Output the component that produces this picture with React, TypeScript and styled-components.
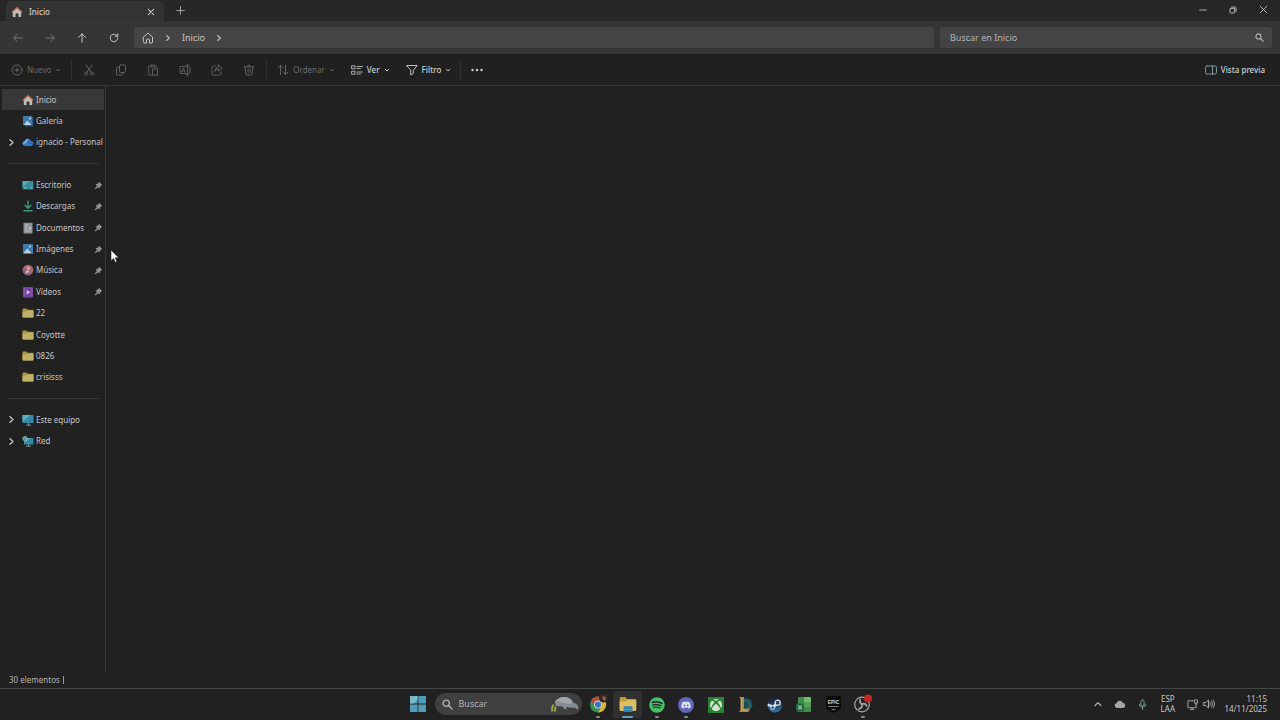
import React from "react";
import styled, { createGlobalStyle } from "styled-components";
import { FaDiscord, FaSpotify, FaSteamSymbol, FaXbox } from "react-icons/fa";

const GlobalStyle = createGlobalStyle`
  * { box-sizing: border-box; }
  body {
    margin: 0;
    background: #212121;
    color: #c6c6c6;
    font: 8px/12px "Noto Sans", "Open Sans", sans-serif;
  }
  button, input {
    font: inherit;
    color: inherit;
    border: 0;
    padding: 0;
    margin: 0;
    background: none;
  }
  a { color: inherit; text-decoration: none; }
  svg { display: block; flex: none; }
`;

const Screen = styled.div`
  display: flex;
  flex-direction: column;
  min-height: 100vh;
`;

/* ---------- title bar ---------- */

const TitleBar = styled.header`
  display: flex;
  height: 21px;
  background: #272727;
`;

const Tab = styled.div`
  display: flex;
  align-items: center;
  width: 158px;
  margin: 1px 0 0 6px;
  padding: 1px 7px 0 5px;
  gap: 6px;
  border-radius: 5px 5px 0 0;
  background: #333;
  color: #d0d0d0;
  font-weight: 500;
`;

const TabTitle = styled.span`
  flex: 1;
`;

const IconButton = styled.button<{ $w?: number; $dim?: boolean }>`
  display: flex;
  align-items: center;
  justify-content: center;
  width: ${(p) => p.$w ?? 32}px;
  color: ${(p) => (p.$dim ? "#727777" : "#c4c4c4")};
`;

const WindowControls = styled.div`
  display: flex;
  margin-left: auto;
  padding: 0 2px 2px 0;
`;

/* ---------- navigation bar ---------- */

const NavBar = styled.div`
  display: flex;
  align-items: center;
  height: 33px;
  padding: 0 8px 0 2px;
  background: #353535;
`;

const fieldBox = `
  display: flex;
  align-items: center;
  height: 21px;
  border-radius: 3px;
  background: #444;
  font-size: 9px;
`;

const AddressBar = styled.nav`
  ${fieldBox}
  flex: 792;
  margin: 0 6px 0 4px;
  padding-left: 8px;
  gap: 10px;
`;

const SearchBox = styled.label`
  ${fieldBox}
  flex: 314;
  padding: 0 8px 0 10px;
`;

const SearchInput = styled.input`
  flex: 1;
  min-width: 0;
  outline: 0;
  &::placeholder { color: #b4b4b4; opacity: 1; }
`;

/* ---------- command bar ---------- */

const CommandBar = styled.div`
  display: flex;
  align-items: center;
  height: 32px;
  padding: 0 15px 0 11px;
  background: #202020;
  border-bottom: 1px solid #353535;
`;

const Command = styled.button<{ $dim?: boolean }>`
  display: flex;
  align-items: center;
  gap: 4px;
  color: ${(p) => (p.$dim ? "#6c6c6c" : "#d0d0d0")};
  font-weight: ${(p) => (p.$dim ? 400 : 500)};
`;

const CommandGroup = styled.div<{ $gap?: number }>`
  display: flex;
  align-items: center;
  gap: ${(p) => p.$gap ?? 0}px;
`;

const Divider = styled.span<{ $l: number; $r: number }>`
  width: 1px;
  height: 20px;
  margin: 0 ${(p) => p.$r}px 0 ${(p) => p.$l}px;
  background: #303030;
`;

const PreviewSlot = styled.div`
  margin-left: auto;
`;

/* ---------- body ---------- */

const Body = styled.div`
  display: flex;
  flex: 1;
`;

const Sidebar = styled.nav`
  width: 106px;
  padding: 3px 1px 0 2px;
  border-right: 1px solid #363636;
`;

const ItemList = styled.ul`
  display: grid;
  grid-template-columns: minmax(0, 1fr);
  grid-auto-rows: 1fr;
  height: 363px;
  margin: 0;
  padding: 0;
  list-style: none;
`;

const Item = styled.li`
  display: grid;
  grid-template-columns: minmax(0, 1fr);
`;

const ItemLink = styled.a<{ $active?: boolean }>`
  display: flex;
  align-items: center;
  padding-right: 1px;
  background: ${(p) => (p.$active ? "#383838" : "transparent")};
`;

const ExpandSlot = styled.span`
  display: flex;
  justify-content: center;
  flex: none;
  width: 18px;
`;

const ItemIcon = styled.span`
  display: flex;
  margin: 0 2px;
`;

const ItemLabel = styled.span`
  flex: 1;
  min-width: 0;
  white-space: nowrap;
`;

const Rule = styled.hr`
  align-self: center;
  width: 92px;
  height: 1px;
  margin: 0 0 0 5px;
  border: 0;
  background: #383838;
`;

const Content = styled.main`
  flex: 1;
`;

const StatusBar = styled.footer`
  display: flex;
  align-items: center;
  gap: 3px;
  height: 16px;
  padding-left: 9px;
  color: #b4b4b4;
`;

const StatusMark = styled.span`
  width: 1px;
  height: 8px;
  background: #999;
`;

/* ---------- taskbar ---------- */

const Taskbar = styled.footer`
  display: grid;
  grid-template-columns: 1fr auto 1fr;
  height: 32px;
  padding-bottom: 1px;
  background: #212121;
  border-top: 1px solid #454745;
`;

const TaskCenter = styled.div`
  display: flex;
  grid-column: 2;
  align-items: center;
`;

const TaskSearch = styled.label`
  display: flex;
  align-items: center;
  width: 147px;
  height: 22px;
  margin: 0 2px;
  padding: 0 3px 0 7px;
  gap: 6px;
  border-radius: 11px;
  background: #3f3f3f;
  font-size: 9px;
`;

const AppRow = styled.div`
  display: grid;
  grid-template-columns: repeat(10, 1fr);
  width: 294px;
`;

const AppButton = styled.button<{ $active?: boolean }>`
  display: flex;
  flex-direction: column;
  align-items: center;
  justify-content: flex-end;
  height: 27px;
  gap: 3px;
  border-radius: 3px;
  background: ${(p) => (p.$active ? "#303030" : "transparent")};
`;

const RunMark = styled.span<{ $kind?: "run" | "active" }>`
  width: ${(p) => (p.$kind === "active" ? 11 : 4)}px;
  height: 2px;
  border-radius: 1px;
  background: ${(p) => (p.$kind === "active" ? "#58a9bd" : p.$kind ? "#8a8a8a" : "transparent")};
`;

const Tray = styled.div`
  display: flex;
  align-items: center;
  justify-content: flex-end;
  padding-right: 13px;
`;

const TrayItem = styled.button<{ $mr: number }>`
  margin-right: ${(p) => p.$mr}px;
  line-height: 10px;
`;

const Clock = styled.button`
  display: flex;
  flex-direction: column;
  align-items: flex-end;
  width: 42px;
  line-height: 10px;
  white-space: nowrap;
`;

const Pointer = styled.svg`
  position: absolute;
  left: 110px;
  top: 249px;
`;

/* ---------- icons ---------- */

type LineProps = { d: string; w?: number; h?: number; box?: string; color?: string; sw?: number };

function Line({ d, w = 12, h = w, box = "0 0 12 12", color = "currentColor", sw = 1 }: LineProps) {
  return (
    <svg width={w} height={h} viewBox={box} fill="none" stroke={color} strokeWidth={sw} strokeLinecap="round" strokeLinejoin="round" aria-hidden>
      <path d={d} />
    </svg>
  );
}

const Chevron = ({ size = 6 }: { size?: number }) => (
  <Line w={size} box="0 0 6 6" d="M2 1.200 4 3 2 4.800" sw={0.9} />
);
const Down = () => <Line w={6} box="0 0 6 6" d="M1.200 2.200 3 4 4.800 2.200" sw={0.9} />;

const HouseColor = () => (
  <svg width="12" height="12" viewBox="0 0 12 12" aria-hidden>
    <path d="M1.800 5.500 6 2l4.200 3.500v5q0 .5-.5.500H7.500V8q0-.6-.6-.6H5.100q-.6 0-.6.600v3H2.300q-.5 0-.5-.5z" fill="#bdbebc" />
    <path d="M1.300 6 6 1.700 10.700 6" fill="none" stroke="#c27850" strokeWidth="1.300" strokeLinecap="round" strokeLinejoin="round" />
  </svg>
);

const Picture = ({ stacked }: { stacked?: boolean }) => (
  <svg width="12" height="12" viewBox="0 0 12 12" aria-hidden>
    {stacked && <path d="M3 2h8.400v9.500H3z" fill="#2b5b87" />}
    <rect x="1" y="1" width={stacked ? 9 : 10} height={stacked ? 9 : 10} rx=".7" fill="#3a7cae" />
    <path d="M1.600 10 5.300 5.400 9.500 10z" fill="#bcd0dc" />
    <circle cx="8" cy="3.400" r="1" fill="#c8d8e2" />
  </svg>
);

const Cloud = () => (
  <svg width="12" height="12" viewBox="0 0 12 12" aria-hidden>
    <path d="M3 10a2.600 2.600 0 0 1-.3-5.100A3.300 3.300 0 0 1 8.800 4.700 2.700 2.700 0 0 1 9.200 10z" fill="#3479c4" />
    <path d="M2.700 4.900A3.300 3.300 0 0 1 7 3L4 7.500 1 8.700A2.600 2.600 0 0 1 2.700 4.900z" fill="#5aa8dc" />
    <path d="M4 7.500 8.800 4.700A2.700 2.700 0 0 1 11.600 8z" fill="#3e62b4" />
  </svg>
);

const DesktopIcon = () => (
  <svg width="12" height="12" viewBox="0 0 12 12" aria-hidden>
    <rect x=".5" y="2" width="11" height="8.500" rx=".8" fill="#398b97" />
    <path d="M.5 8V2.800A.8.800 0 0 1 1.300 2H8z" fill="#58a9ac" />
    <path d="M2 8.800h3M8 8.800h2" stroke="#8ecbd0" strokeWidth=".8" />
  </svg>
);

const DownloadIcon = () => <Line d="M6 1v7M3 5.300 6 8.300l3-3M2 10.800h8" color="#3a9d78" sw={1.4} />;

const DocumentIcon = () => (
  <svg width="12" height="12" viewBox="0 0 12 12" aria-hidden>
    <rect x="1.500" y=".7" width="9" height="10.800" rx=".7" fill="#8a9296" />
    <path d="M3 3h3.500M3 5h2M3 7h2M3 9h6M7 5h2v2H7z" stroke="#c6cbce" strokeWidth=".8" fill="none" />
  </svg>
);

const MusicIcon = () => (
  <svg width="12" height="12" viewBox="0 0 12 12" aria-hidden>
    <circle cx="6" cy="6" r="5.300" fill="#ad6a70" />
    <path d="M.9 4.500A5.300 5.300 0 0 0 8 10.900L6 6z" fill="#8c6289" />
    <circle cx="5" cy="8" r="1.100" fill="#ddd" />
    <path d="M6 8V3.200l2 1" fill="none" stroke="#ddd" strokeWidth=".9" />
  </svg>
);

const VideoIcon = () => (
  <svg width="12" height="12" viewBox="0 0 12 12" aria-hidden>
    <rect x="1" y="1" width="10" height="10.500" rx=".8" fill="#7444a0" />
    <path d="M2.200 2v9M9.800 2v9" stroke="#b18bd0" strokeWidth=".8" strokeDasharray="1 1.200" />
    <path d="M4.700 4v4.500L8.300 6.200z" fill="#d2bde4" />
  </svg>
);

const FolderIcon = () => (
  <svg width="12" height="12" viewBox="0 0 12 12" aria-hidden>
    <path d="M.5 2.400q0-.9.900-.9h3l1.300 1.300h5q.8 0 .8.800v6q0 .9-.8.900H1.300q-.8 0-.8-.9z" fill="#a8953f" />
    <path d="M.5 4.500h3.800l1.400-1h5.800v6.200q0 .8-.8.800H1.300q-.8 0-.8-.8z" fill="#c0b068" />
  </svg>
);

const ExplorerIcon = () => (
  <svg width="18" height="17" viewBox="0 0 18 17" aria-hidden>
    <path d="M.7 2q0-1 1-1h4.500l2 2h8q1 0 1 1v9H.7z" fill="#c29a3a" />
    <path d="M.7 5.500h5.500l2-1.300h9V14q0 1-1 1H1.700q-1 0-1-1z" fill="#dcc065" />
    <path d="M4.500 16v-4.500q0-1.300 1.300-1.300h6.400q1.300 0 1.300 1.300V16z" fill="#2f86b0" />
    <path d="M4.500 13.500h9" stroke="#4ba4c4" />
  </svg>
);

const MonitorIcon = ({ net }: { net?: boolean }) => (
  <svg width="12" height="12" viewBox="0 0 12 12" aria-hidden>
    <rect x={net ? 2 : 0.5} y={net ? 3 : 1} width={net ? 9.5 : 11} height={net ? 6.5 : 8} rx=".6" fill="#3788a5" />
    <path d={net ? "M2 8V3h7z" : "M.5 8V1h8z"} fill="#5cb0bb" />
    <path d="M6.500 9v2M4 11.200h5" stroke="#8197a0" />
    {net && <circle cx="3" cy="3.500" r="2.500" fill="#7fa9ad" />}
    {net && <path d="M1.200 2.500 3 3.500 2.500 5.500M4 1.500 4.500 3.500" stroke="#3a7182" strokeWidth=".7" fill="none" />}
  </svg>
);

const Pin = () => (
  <svg width="9" height="9" viewBox="0 0 9 9" aria-hidden>
    <path d="M5 .7 8.300 4 7.300 4.400 6 5.700 5.800 7.600 4.200 6.200 1 8.500.5 8 2.900 4.900 1.500 3.300 3.300 3 4.600 1.800z" fill="#8d9090" />
  </svg>
);

const Magnifier = ({ size = 9 }: { size?: number }) => (
  <Line w={size} d="M8 4.600a3.400 3.400 0 1 1-6.800 0 3.400 3.400 0 0 1 6.800 0M7.200 7.200 11 11" sw={1.5} color="#b0b0b0" />
);

const WindowsLogo = () => (
  <svg width="16" height="16" viewBox="0 0 16 16" aria-hidden>
    <path d="M0 0h7.600v7.600H0zM8.400 0H16v7.600H8.400zM0 8.400h7.600V16H0zM8.400 8.400H16V16H8.400z" fill="#4f9dbb" />
    <path d="M0 0h7.600v3.500L3.500 7.600H0z" fill="#79b9ca" />
  </svg>
);

const Manatee = () => (
  <svg width="28" height="18" viewBox="0 0 28 18" aria-hidden>
    <path d="M4 7.500Q3.800 5.500 6 4.500 8.500 2 13 2q6 0 9 5 1.500 1.500 3.500 2 2.500 2.500 1.500 5.500-1.500.5-3-2-4 .8-9-.7l.8 2.200-1.800.6-3-3.400q-5 .8-6.200-.7Q4 9.500 4 7.500z" fill="#868c91" />
    <path d="M6 4.500Q8.500 2 13 2q5.500 0 8 4 1 3-3 3-7-2.500-13.500-1.500Q4.500 5 6 4.500z" fill="#a2a7aa" />
    <circle cx="7" cy="6.500" r=".6" fill="#333" />
    <path d="M1.500 16.500Q.5 13 2.500 9.500M3.500 16.500Q5 13.500 4 11.500" fill="none" stroke="#9aa445" strokeWidth="2" />
  </svg>
);

const Chrome = () => (
  <svg width="19" height="20" viewBox="0 0 19 20" aria-hidden>
    <circle cx="9" cy="11.500" r="8" fill="#389250" />
    <path d="M2.100 7.500A8 8 0 0 1 16 7.500H9a4 4 0 0 0-3.500 6z" fill="#c24437" />
    <path d="M16 7.500A8 8 0 0 1 9 19.500l3.500-6A4 4 0 0 0 9 7.500z" fill="#d9b23a" />
    <circle cx="9" cy="11.500" r="4" fill="#d6d9d8" />
    <circle cx="9" cy="11.500" r="3.100" fill="#3a75be" />
    <circle cx="14.500" cy="5" r="4.500" fill="#302727" />
    <path d="M13 4q3-2 4 1l-1 3-2-1z" fill="#8f5e50" />
  </svg>
);

const Disc = ({ bg, r, children }: { bg: string; r: number; children: React.ReactNode }) => (
  <svg width="16" height="16" viewBox="0 0 17 17" aria-hidden>
    <rect width="17" height="17" rx={r} fill={bg} />
    {children}
  </svg>
);

const Steam = () => (
  <svg width="16" height="16" viewBox="0 0 17 17" aria-hidden>
    <defs>
      <linearGradient id="steam" x1="0" y1="0" x2="0" y2="1">
        <stop offset=".2" stopColor="#1c2740" />
        <stop offset="1" stopColor="#2d76a8" />
      </linearGradient>
    </defs>
    <circle cx="8.500" cy="8.500" r="8" fill="url(#steam)" />
    <path d="M.8 8 7 10.500" stroke="#d6dee4" strokeWidth="2.600" />
    <path d="M6.500 11 11 6.500" stroke="#d6dee4" strokeWidth="3" />
    <circle cx="6" cy="11.300" r="2" fill="#2a5f8c" stroke="#d6dee4" />
    <circle cx="11.300" cy="6" r="2.700" fill="#26405f" stroke="#d6dee4" strokeWidth="1.400" />
  </svg>
);

const League = () => (
  <svg width="16" height="17" viewBox="0 0 16 17" aria-hidden>
    <path d="M5 3a6.500 6.500 0 0 1 8 10.500H5z" fill="#1d4c55" />
    <path d="M7 4.500a5 5 0 0 1 5 8" fill="none" stroke="#327780" strokeWidth="1.300" />
    <path d="M2 1h5v11.500h6L11.500 16H2l1.500-2V3z" fill="#a98a50" />
    <path d="M4.500 2.500v11.700H10" fill="none" stroke="#d0b67c" strokeWidth=".8" />
  </svg>
);

const Sheets = () => (
  <svg width="17" height="17" viewBox="0 0 17 17" aria-hidden>
    <rect x="3" y="1" width="13" height="15" rx="1" fill="#3f8f4c" />
    <path d="M9 1h6q1 0 1 1v4H9z" fill="#74ba6a" />
    <path d="M9 6h7v5H9z" fill="#559f56" />
    <rect x="1" y="7.500" width="8" height="8" rx="1" fill="#1f6a3f" />
    <path d="m3.300 9.700 3.500 3.700M6.800 9.700l-3.500 3.700" stroke="#b4cfba" strokeWidth="1.200" />
  </svg>
);

const Epic = () => (
  <svg width="15" height="17" viewBox="0 0 15 17" aria-hidden>
    <path d="M1 0h13q1 0 1 1v12l-7.500 4L0 13V1q0-1 1-1z" fill="#0c0c0c" />
    <text x="7.500" y="8" textAnchor="middle" fontSize="5" fontWeight="700" fontFamily="Liberation Sans, sans-serif" fill="#d4d4d4">EPIC</text>
    <path d="M2.500 10.500h10" stroke="#a0a0a0" strokeWidth="1.200" strokeDasharray="1.800 .6" />
    <path d="M5 13h5l-2.500 1.300z" fill="#a0a0a0" />
  </svg>
);

const Obs = () => (
  <svg width="19" height="19" viewBox="0 0 19 19" aria-hidden>
    <circle cx="9" cy="10.500" r="7.300" fill="#242424" stroke="#a5a5a5" strokeWidth="1.200" />
    <path d="M7.200 5.500Q6.200 9 9 10.300M13.800 11.800Q11.500 8.600 9 10.300M6 14.800Q9.600 14 9 10.300" fill="none" stroke="#a5a5a5" strokeWidth="1.700" strokeLinecap="round" />
    <circle cx="15" cy="4.500" r="4" fill="#c52822" />
  </svg>
);

/* ---------- data ---------- */

type Entry = { label: string; icon: React.ReactNode; pinned?: boolean; expandable?: boolean; active?: boolean };

const entries: (Entry | null)[] = [
  { label: "Inicio", icon: <HouseColor />, active: true },
  { label: "Galería", icon: <Picture stacked /> },
  { label: "ignacio - Personal", icon: <Cloud />, expandable: true },
  null,
  { label: "Escritorio", icon: <DesktopIcon />, pinned: true },
  { label: "Descargas", icon: <DownloadIcon />, pinned: true },
  { label: "Documentos", icon: <DocumentIcon />, pinned: true },
  { label: "Imágenes", icon: <Picture />, pinned: true },
  { label: "Música", icon: <MusicIcon />, pinned: true },
  { label: "Vídeos", icon: <VideoIcon />, pinned: true },
  { label: "22", icon: <FolderIcon /> },
  { label: "Coyotte", icon: <FolderIcon /> },
  { label: "0826", icon: <FolderIcon /> },
  { label: "crisisss", icon: <FolderIcon /> },
  null,
  { label: "Este equipo", icon: <MonitorIcon />, expandable: true },
  { label: "Red", icon: <MonitorIcon net />, expandable: true },
];

const editCommands = [
  { label: "Cortar", d: "M3.200 1 8 8.300M8.800 1 4 8.300M4.600 9.500a1.500 1.500 0 1 1-3 0 1.500 1.500 0 0 1 3 0M10.400 9.500a1.500 1.500 0 1 1-3 0 1.500 1.500 0 0 1 3 0" },
  { label: "Copiar", d: "M5.500 1h4q1 0 1 1v5.500q0 1-1 1h-4q-1 0-1-1V2q0-1 1-1M4.500 3.500h-2q-1 0-1 1V10q0 1 1 1h4q1 0 1-1V8.500" },
  { label: "Pegar", d: "M4 2H2.500q-.8 0-.8.800v7.400q0 .8.800.800H5M8 2h1q.8 0 .8.800V4M4.500 1h3v2h-3zM6 5h4.500v6.200H6z" },
  { label: "Cambiar nombre", d: "M7 2.500H2q-1 0-1 1v5q0 1 1 1h5M10 2.500q1 0 1 1v5q0 1-1 1M8.500 1v10M7.500 1h2M7.500 11h2M2.700 8 4.400 4 6.100 8M3.300 6.800h2.200" },
  { label: "Compartir", d: "M5 2H2.500Q1 2 1 3.500v6Q1 11 2.500 11h6Q10 11 10 9.500V8M7.500 1 11 4 7.500 7V5.200Q5 5 3.800 7.500 4 3.500 7.500 2.800z" },
  { label: "Eliminar", d: "M1 2.800h10M4.500 2.500q0-1.500 1.500-1.500t1.500 1.500M2 3l.8 7q.1 1 1 1h4.400q.9 0 1-1L10 3M5 5v4M7 5v4" },
];

const apps: { label: string; icon: React.ReactNode; state?: "run" | "active" }[] = [
  { label: "Chrome", icon: <Chrome />, state: "run" },
  { label: "Explorador de archivos", icon: <ExplorerIcon />, state: "active" },
  { label: "Spotify", icon: <FaSpotify size={16} color="#48bd6a" />, state: "run" },
  { label: "Discord", icon: <Disc bg="#5d66bb" r={8.5}><FaDiscord x="3" y="3" size={11} color="#dcdcec" /></Disc>, state: "run" },
  { label: "Xbox", icon: <Disc bg="#2b8335" r={1}><FaXbox x="2" y="2" size={13} color="#d5e3d5" /></Disc> },
  { label: "League of Legends", icon: <League /> },
  { label: "Steam", icon: <Steam /> },
  { label: "Hojas", icon: <Sheets /> },
  { label: "Epic Games", icon: <Epic /> },
  { label: "OBS", icon: <Obs />, state: "run" },
];

export default function App() {
  return (
    <Screen>
      <GlobalStyle />
      <TitleBar>
        <Tab>
          <HouseColor />
          <TabTitle>Inicio</TabTitle>
          <IconButton $w={12} aria-label="Cerrar pestaña"><Line w={8} d="M2 2l8 8M10 2l-8 8" sw={1.6} /></IconButton>
        </Tab>
        <IconButton aria-label="Nueva pestaña"><Line w={9} d="M6 1v10M1 6h10" /></IconButton>
        <WindowControls>
          <IconButton $w={30} aria-label="Minimizar"><Line w={8} d="M1 6h10" sw={1.3} /></IconButton>
          <IconButton $w={30} aria-label="Restaurar"><Line w={8} d="M2.500 3.500h5q1 0 1 1v5q0 1-1 1h-5q-1 0-1-1v-5q0-1 1-1M4 1.500h4.500q2 0 2 2V8" sw={1.4} /></IconButton>
          <IconButton $w={30} aria-label="Cerrar"><Line w={9} d="M1.500 1.500l9 9M10.500 1.500l-9 9" sw={1.2} /></IconButton>
        </WindowControls>
      </TitleBar>

      <NavBar>
        <IconButton $dim aria-label="Atrás"><Line w={10} d="M11 6H1M5 1.500 1 6l4 4.500" sw={1.2} /></IconButton>
        <IconButton $dim aria-label="Adelante"><Line w={10} d="M1 6h10M7 1.500 11 6 7 10.500" sw={1.2} /></IconButton>
        <IconButton aria-label="Arriba"><Line w={10} d="M6 11V1M1.500 5.500 6 1l4.500 4.500" sw={1.2} /></IconButton>
        <IconButton aria-label="Actualizar"><Line w={10} d="M10.500 6A4.500 4.500 0 1 1 8.500 2.200L10.500 4M10.500 1v3h-3" sw={1.2} /></IconButton>
        <AddressBar aria-label="Ruta">
          <Line w={12} d="M1.500 5 6 1l4.500 4v5q0 1-1 1H7.500V8q0-1-1-1h-1q-1 0-1 1v3H2.500q-1 0-1-1z" />
          <Chevron size={8} />
          <a href="#inicio">Inicio</a>
          <Chevron size={8} />
        </AddressBar>
        <SearchBox>
          <SearchInput type="text" placeholder="Buscar en Inicio" aria-label="Buscar en Inicio" />
          <Magnifier />
        </SearchBox>
      </NavBar>

      <CommandBar>
        <Command $dim>
          <Line d="M11 6A5 5 0 1 1 1 6a5 5 0 0 1 10 0M6 3.800v4.400M3.800 6h4.400" sw={0.9} />Nuevo<Down />
        </Command>
        <Divider $l={10} $r={11} />
        <CommandGroup $gap={20}>
          {editCommands.map((c) => (
            <IconButton key={c.label} $w={12} $dim aria-label={c.label}><Line d={c.d} sw={0.9} color="#606868" /></IconButton>
          ))}
        </CommandGroup>
        <Divider $l={11} $r={10} />
        <CommandGroup $gap={16}>
          <Command $dim><Line d="M3.500 10.500v-9M1 4l2.500-2.500L6 4M8.500 1.500v9M6.500 8l2 2.500L11 8" sw={0.9} />Ordenar<Down /></Command>
          <Command><Line d="M1 1.800h3v3H1zM1 7.200h3v3H1zM6 2.500h5.500M6 4.500h3.500M6 8h5.500M6 10h3.500" sw={0.8} />Ver<Down /></Command>
          <Command><Line d="M.8 1.500h10.400L7.300 6.300v3L4.700 11V6.300z" sw={0.9} />Filtro<Down /></Command>
        </CommandGroup>
        <Divider $l={9} $r={10} />
        <IconButton $w={12} aria-label="Más opciones">
          <svg width="12" height="4" viewBox="0 0 12 4" fill="#d0d0d0" aria-hidden><circle cx="1.500" cy="2" r="1.200" /><circle cx="6" cy="2" r="1.200" /><circle cx="10.500" cy="2" r="1.200" /></svg>
        </IconButton>
        <PreviewSlot>
          <Command>
            <Line d="M2 2h8q1.500 0 1.500 1.500v5Q11.500 10 10 10H2Q.5 10 .5 8.500v-5Q.5 2 2 2M7.500 2v8" sw={0.9} color="#8fa3a5" />Vista previa
          </Command>
        </PreviewSlot>
      </CommandBar>

      <Body>
        <Sidebar aria-label="Carpetas">
          <ItemList>
            {entries.map((e, i) => (
              <Item key={i}>
                {e ? (
                  <ItemLink href="#" $active={e.active}>
                    <ExpandSlot>{e.expandable && <Chevron size={9} />}</ExpandSlot>
                    <ItemIcon>{e.icon}</ItemIcon>
                    <ItemLabel>{e.label}</ItemLabel>
                    {e.pinned && <Pin />}
                  </ItemLink>
                ) : (
                  <Rule />
                )}
              </Item>
            ))}
          </ItemList>
        </Sidebar>
        <Content />
      </Body>
      <StatusBar>30 elementos<StatusMark /></StatusBar>

      <Taskbar>
        <TaskCenter>
          <IconButton $w={30} aria-label="Inicio de Windows"><WindowsLogo /></IconButton>
          <TaskSearch>
            <Magnifier size={11} />
            <SearchInput type="text" placeholder="Buscar" aria-label="Buscar" />
            <Manatee />
          </TaskSearch>
          <AppRow>
            {apps.map((a) => (
              <AppButton key={a.label} aria-label={a.label} $active={a.state === "active"}>
                {a.icon}
                <RunMark $kind={a.state} />
              </AppButton>
            ))}
          </AppRow>
        </TaskCenter>
        <Tray>
          <TrayItem $mr={12} aria-label="Mostrar iconos ocultos"><Line w={8} d="M1.500 8.500 6 4l4.500 4.500" sw={1.7} /></TrayItem>
          <TrayItem $mr={11} aria-label="OneDrive">
            <svg width="12" height="12" viewBox="0 0 12 12" aria-hidden><path d="M3 10a2.600 2.600 0 0 1-.3-5.100A3.300 3.300 0 0 1 8.800 4.700 2.700 2.700 0 0 1 9.200 10z" fill="#a6a6a6" /></svg>
          </TrayItem>
          <TrayItem $mr={13} aria-label="Micrófono"><Line w={11} d="M6 1q1.700 0 1.700 1.700v3Q7.700 7.500 6 7.500T4.300 5.700v-3Q4.300 1 6 1M2.500 5.500Q2.500 9 6 9t3.500-3.500M6 9v2.500" color="#79a695" /></TrayItem>
          <TrayItem $mr={12}>ESP<br />LAA</TrayItem>
          <TrayItem $mr={5} aria-label="Red"><Line w={11} d="M7 2H1v7.500h9V6M3.500 11.500h4M5.500 9.500v2M8.500 1h3v3.500h-3zM10 4.500V6" color="#a9a9a9" /></TrayItem>
          <TrayItem $mr={10} aria-label="Volumen"><Line w={12} d="M1 4.500h1.700L5.500 2v8L2.700 7.500H1zM7 4.500q1 1.500 0 3M8.700 3.200q2 2.800 0 5.600M10.200 2q2.800 4 0 8" color="#b0b0b0" sw={0.9} /></TrayItem>
          <Clock><span>11:15</span><span>14/11/2025</span></Clock>
        </Tray>
      </Taskbar>

      <Pointer width="9" height="14" viewBox="0 0 9 14" aria-hidden>
        <path d="M1 1v10.800l2.500-2.300 1.700 3.800 1.700-.8-1.700-3.700h3.500z" fill="#fff" stroke="#222" strokeWidth=".6" />
      </Pointer>
    </Screen>
  );
}
